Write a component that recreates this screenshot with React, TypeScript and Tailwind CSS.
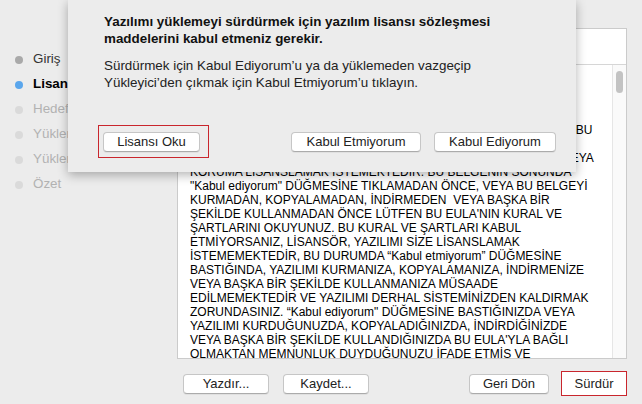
import React from "react";

const steps = [
  { label: "Giriş", state: "done" },
  { label: "Lisans", state: "current" },
  { label: "Hedef Seçimi", state: "todo" },
  { label: "Yükleme Türü", state: "todo" },
  { label: "Yükleme", state: "todo" },
  { label: "Özet", state: "todo" },
];

const licenseLines = [
  "İŞBU YAZILIM LİSANS SÖZLEŞMESİ (“EULA”) SİZİNLE",
  "(BİREYSEL OLARAK VEYA TEK BİR TÜZEL KİŞİLİK OLARAK)",
  "VE LİSANSÖR ARASINDA YAPILAN YASAL BİR SÖZLEŞMEDİR.",
  "LİSANSÖR, YAZILIMI YALNIZCA BU EULA'DA YER ALAN",
  "ŞARTLARINI KABUL ETMENİZ HALİNDE, SİZE LİSANSLAMAKTADIR. BU",
  "YAZILIMIN MÜLKİYETİ LİSANSÖRDE KALMAKTADIR.",
  "DEVRETMEMEKTE, KULLANIMINIZA SUNMAKTADIR, VE YAZILIMI VEYA",
  "KORUMA LİSANSLAMAK İSTEMEKTEDİR. BU BELGENİN SONUNDA",
  "\"Kabul ediyorum\" DÜĞMESİNE TIKLAMADAN ÖNCE, VEYA BU BELGEYİ",
  "KURMADAN, KOPYALAMADAN, İNDİRMEDEN  VEYA BAŞKA BİR",
  "ŞEKİLDE KULLANMADAN ÖNCE LÜTFEN BU EULA'NIN KURAL VE",
  "ŞARTLARINI OKUYUNUZ. BU KURAL VE ŞARTLARI KABUL",
  "ETMİYORSANIZ, LİSANSÖR, YAZILIMI SİZE LİSANSLAMAK",
  "İSTEMEMEKTEDİR, BU DURUMDA “Kabul etmiyorum” DÜĞMESİNE",
  "BASTIĞINDA, YAZILIMI KURMANIZA, KOPYALAMANIZA, İNDİRMENİZE",
  "VEYA BAŞKA BİR ŞEKİLDE KULLANMANIZA MÜSAADE",
  "EDİLMEMEKTEDİR VE YAZILIMI DERHAL SİSTEMİNİZDEN KALDIRMAK",
  "ZORUNDASINIZ. “Kabul ediyorum\" DÜĞMESİNE BASTIĞINIZDA VEYA",
  "YAZILIMI KURDUĞUNUZDA, KOPYALADIĞINIZDA, İNDİRDİĞİNİZDE",
  "VEYA BAŞKA BİR ŞEKİLDE KULLANDIĞINIZDA BU EULA'YLA BAĞLI",
  "OLMAKTAN MEMNUNLUK DUYDUĞUNUZU İFADE ETMİS VE",
];

const buttonClass =
  "flex h-[20px] items-center justify-center rounded-[4px] border border-[#c6c6c6] border-b-[#ababab] bg-white text-[13px] text-[#222] shadow-[0_1px_0_rgba(0,0,0,0.05)]";

function StepItem({ label, state }: { label: string; state: string }) {
  const dot =
    state === "current"
      ? "bg-[#5aa6ec]"
      : state === "done"
        ? "bg-[#a9a9a9]"
        : "bg-[#dadada]";
  const text =
    state === "current"
      ? "font-bold text-black"
      : state === "done"
        ? "text-[#333]"
        : "text-[#b2b2b2]";

  return (
    <div className="flex h-[25px] items-center gap-[10px] pl-[15px]">
      <span className={`h-[8px] w-[8px] shrink-0 rounded-full ${dot}`} />
      <span className={`whitespace-nowrap text-[13.4px] ${text}`}>{label}</span>
    </div>
  );
}

export default function App() {
  return (
    <div className="relative h-[404px] w-[642px] overflow-hidden bg-[#ececec] font-['Liberation_Sans',Arial,sans-serif]">
      <div className="flex h-full">
        <aside className="w-[177px] shrink-0 pt-[47px]">
          {steps.map((step) => (
            <StepItem key={step.label} label={step.label} state={step.state} />
          ))}
        </aside>

        <main className="flex w-[450px] flex-col pt-[28px]">
          <div className="flex h-[331px] flex-col border border-[#cbcbcb] bg-white">
            <div className="h-[36px] border-b border-[#d6d6d6]" />
            <div className="flex min-h-0 flex-1">
              <div className="flex-1 overflow-hidden pl-[12px] pt-[2px] text-[12px] leading-[14px] text-black">
                {licenseLines.map((line, i) => (
                  <div key={i} className="whitespace-pre">
                    {line}
                  </div>
                ))}
              </div>
              <div className="w-[14px] shrink-0 border-l border-[#e6e6e6] bg-[#fafafa] pl-[3px] pt-[6px]">
                <div className="h-[22px] w-[7px] rounded-full bg-[#c3c3c3]" />
              </div>
            </div>
          </div>

          <div className="mt-[12px] flex h-[25px] items-center">
            <button type="button" className={`${buttonClass} ml-[6px] w-[86px]`}>
              Yazdır...
            </button>
            <button type="button" className={`${buttonClass} ml-[14px] w-[86px]`}>
              Kaydet...
            </button>
            <div className="flex-1" />
            <button type="button" className={`${buttonClass} w-[80px]`}>
              Geri Dön
            </button>
            <button
              type="button"
              className="ml-[12px] flex h-[25px] w-[66px] items-center justify-center border border-[#c9262d] bg-white text-[13px] text-[#222]"
            >
              Sürdür
            </button>
          </div>
        </main>
      </div>

      {/* sheet dialog */}
      <div className="absolute left-[68px] top-0 flex h-[172px] w-[508px] flex-col bg-[#ececec] px-[36px] pt-[13px] shadow-[0_3px_10px_rgba(0,0,0,0.3)]">
        <p className="whitespace-nowrap text-[13.4px] font-bold leading-[17px] text-[#111]">
          Yazılımı yüklemeyi sürdürmek için yazılım lisansı sözleşmesi
          <br />
          maddelerini kabul etmeniz gerekir.
        </p>
        <p className="mt-[10px] whitespace-nowrap text-[13.4px] leading-[17px] text-[#222]">
          Sürdürmek için Kabul Ediyorum’u ya da yüklemeden vazgeçip
          <br />
          Yükleyici’den çıkmak için Kabul Etmiyorum’u tıklayın.
        </p>
        <div className="mt-[34px] flex items-center">
          <div className="-ml-[6px] flex h-[33px] w-[111px] items-center border border-[#c9262d] pl-[4px]">
            <button type="button" className={`${buttonClass} w-[97px]`}>
              Lisansı Oku
            </button>
          </div>
          <div className="flex-1" />
          <button type="button" className={`${buttonClass} w-[130px]`}>
            Kabul Etmiyorum
          </button>
          <button type="button" className={`${buttonClass} ml-[13px] mr-[-16px] w-[122px]`}>
            Kabul Ediyorum
          </button>
        </div>
      </div>
    </div>
  );
}
